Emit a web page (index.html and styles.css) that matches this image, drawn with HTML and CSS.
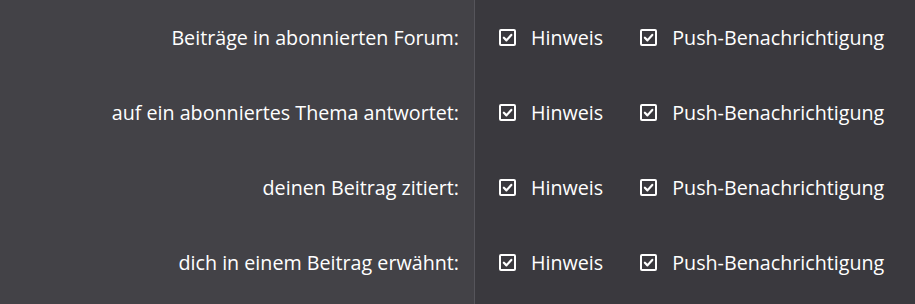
FILE: index.html
```html
<!DOCTYPE html>
<html lang="de">
<head>
    <meta charset="UTF-8">
    <meta name="viewport" content="width=device-width, initial-scale=1.0">
    <title>Benachrichtigungen</title>
    <link rel="stylesheet" href="styles.css">
</head>
<body>
    <div class="settings">
        <div class="label">Beiträge in abonnierten Forum:</div>
        <div class="options">
            <label class="option"><span class="box"><svg viewBox="0 0 10 10"><path d="M2.2 5.2 L4.2 7.2 L7.9 3"/></svg></span>Hinweis</label>
            <label class="option"><span class="box"><svg viewBox="0 0 10 10"><path d="M2.2 5.2 L4.2 7.2 L7.9 3"/></svg></span>Push-Benachrichtigung</label>
        </div>

        <div class="label">auf ein abonniertes Thema antwortet:</div>
        <div class="options">
            <label class="option"><span class="box"><svg viewBox="0 0 10 10"><path d="M2.2 5.2 L4.2 7.2 L7.9 3"/></svg></span>Hinweis</label>
            <label class="option"><span class="box"><svg viewBox="0 0 10 10"><path d="M2.2 5.2 L4.2 7.2 L7.9 3"/></svg></span>Push-Benachrichtigung</label>
        </div>

        <div class="label">deinen Beitrag zitiert:</div>
        <div class="options">
            <label class="option"><span class="box"><svg viewBox="0 0 10 10"><path d="M2.2 5.2 L4.2 7.2 L7.9 3"/></svg></span>Hinweis</label>
            <label class="option"><span class="box"><svg viewBox="0 0 10 10"><path d="M2.2 5.2 L4.2 7.2 L7.9 3"/></svg></span>Push-Benachrichtigung</label>
        </div>

        <div class="label">dich in einem Beitrag erwähnt:</div>
        <div class="options">
            <label class="option"><span class="box"><svg viewBox="0 0 10 10"><path d="M2.2 5.2 L4.2 7.2 L7.9 3"/></svg></span>Hinweis</label>
            <label class="option"><span class="box"><svg viewBox="0 0 10 10"><path d="M2.2 5.2 L4.2 7.2 L7.9 3"/></svg></span>Push-Benachrichtigung</label>
        </div>
    </div>
</body>
</html>
```
FILE: styles.css
```css
body {
    margin: 0;
    background-color: #3a393e;
    color: #ffffff;
    font-family: "Open Sans", "Noto Sans", Arial, sans-serif;
    font-size: 19.7px;
    height: 304px;
    overflow: hidden;
}
.settings {
    display: grid;
    grid-template-columns: 474px 1fr;
    grid-auto-rows: 75px;
    background: linear-gradient(to right, #434247 474px, #56555b 474px, #56555b 475px, #3a393e 475px);
    min-height: 304px;
}
.label {
    display: flex;
    align-items: center;
    justify-content: flex-end;
    padding-right: 15px;
}
.options {
    display: flex;
    align-items: center;
    padding-left: 25px;
    gap: 37px;
}
.option {
    display: flex;
    align-items: center;
    gap: 15px;
    cursor: pointer;
}
.box {
    width: 13px;
    height: 13px;
    border: 2px solid #ffffff;
    border-radius: 2px;
    display: flex;
}
.box svg {
    width: 13px;
    height: 13px;
}
.box path {
    fill: none;
    stroke: #ffffff;
    stroke-width: 1.7;
    stroke-linecap: round;
    stroke-linejoin: round;
}
```
